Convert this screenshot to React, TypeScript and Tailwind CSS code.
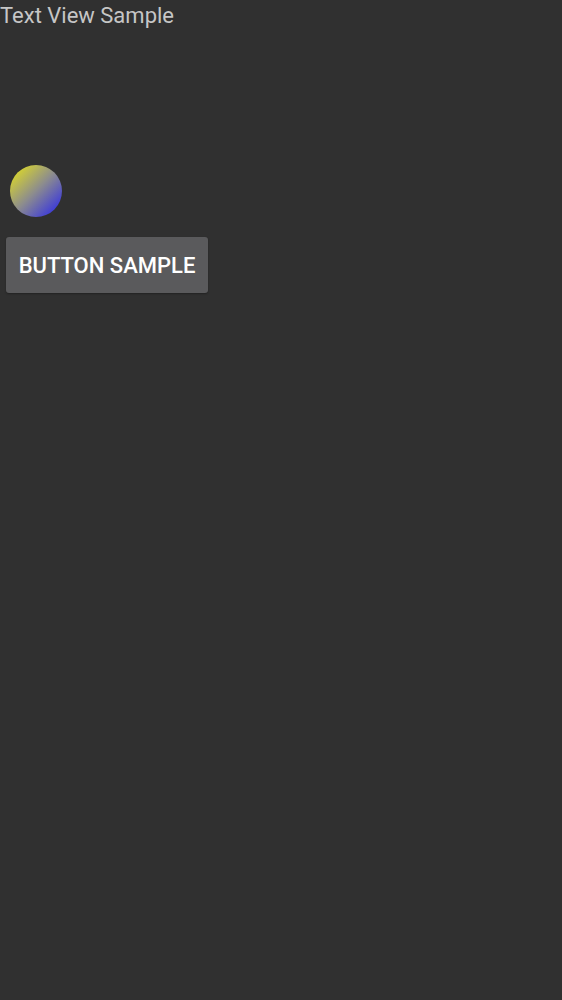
export default function App() {
  return (
    <div className="min-h-screen w-full bg-[#303030] flex flex-col items-start font-['Roboto',sans-serif]">
      <div className="text-[22px] leading-[32px] text-[#c6c6c6]">Text View Sample</div>
      <div className="mt-[133px] ml-[10px] w-[52px] h-[52px] rounded-full bg-[linear-gradient(135deg,#ebe715_0%,#8c8c8e_50%,#2320f2_100%)]" />
      <button className="mt-[20px] ml-[6px] w-[202px] h-[56px] rounded-[3px] bg-[#5a5a5c] text-white text-[22px] font-medium shadow-[0_1px_2px_rgba(0,0,0,0.3)]">
        BUTTON SAMPLE
      </button>
    </div>
  );
}
